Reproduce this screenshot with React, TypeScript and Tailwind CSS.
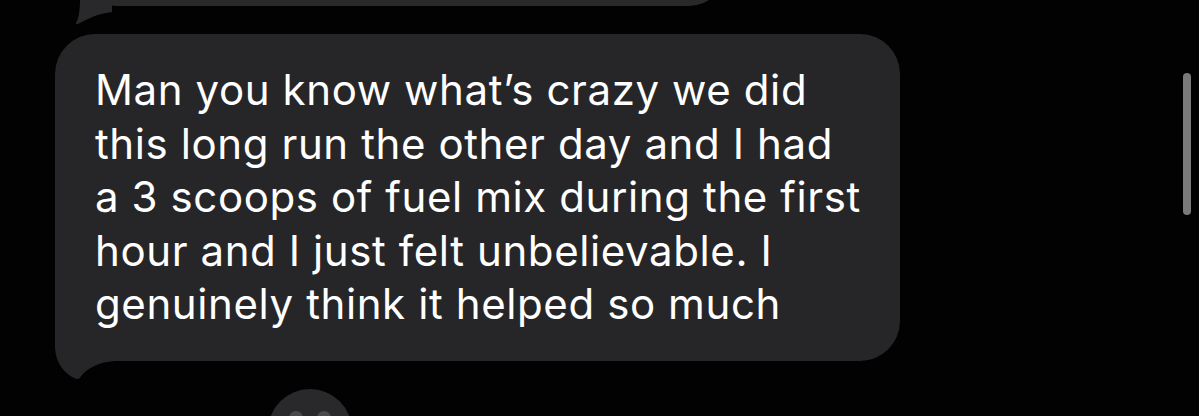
import React from 'react';

const lines = [
  'Man you know what\u2019s crazy we did',
  'this long run the other day and I had',
  'a 3 scoops of fuel mix during the first',
  'hour and I just felt unbelievable. I',
  'genuinely think it helped so much',
];

const Tail: React.FC<{ className: string }> = ({ className }) => (
  <svg className={className} width="64" height="60" viewBox="0 0 64 60" fill="#262629">
    <path d="M0 0 L0 28 C1 44 10 54 20 58.5 C22.5 59.5 24.5 59 25.5 57 C32 48 43 42.5 60 41 L60 0 Z" />
  </svg>
);

export default function App() {
  return (
    <div
      className="flex h-[416px] w-[1199px] overflow-hidden bg-[#020202]"
      style={{ fontFamily: 'Inter, "Liberation Sans", sans-serif' }}
    >
      <div className="flex flex-1 flex-col items-start">
        {/* previous message, mostly scrolled off */}
        <div className="relative ml-[80px] -mt-[94px] h-[100px] w-[645px] shrink-0 rounded-[36px] bg-[#29292b]">
          <svg className="absolute left-[-6px] top-[76px]" width="40" height="42" viewBox="0 0 40 42" fill="#29292b">
            <path d="M6 0 L6 18 C6 30 4 38 2 41 C1.5 42 3 42.5 5 41.5 C14 37 22 32 38 30 L38 0 Z" />
          </svg>
        </div>

        {/* incoming bubble */}
        <div className="relative ml-[55px] mt-[28px] h-[327px] w-[845px] shrink-0 rounded-[40px] bg-[#262629] pl-[40px] pt-[29px]">
          <Tail className="absolute left-0 top-[286px]" />
          <div className="relative text-[42px] leading-[53.5px] tracking-[0.6px] text-white">
            {lines.map((l) => (
              <div key={l} className="whitespace-nowrap">
                {l}
              </div>
            ))}
          </div>
        </div>

        {/* typing indicator */}
        <div className="ml-[268px] mt-[28px] flex h-[84px] w-[84px] shrink-0 justify-center gap-[14px] rounded-full bg-[#29292b] pt-[22px]">
          <span className="h-[14px] w-[14px] rounded-full bg-[#4a4a4e]" />
          <span className="h-[14px] w-[14px] rounded-full bg-[#4a4a4e]" />
        </div>
      </div>

      {/* scroll indicator */}
      <div className="w-[16px] shrink-0 pt-[73px]">
        <div className="h-[142px] w-[8px] rounded-full bg-[#7a7a7a]" />
      </div>
    </div>
  );
}
